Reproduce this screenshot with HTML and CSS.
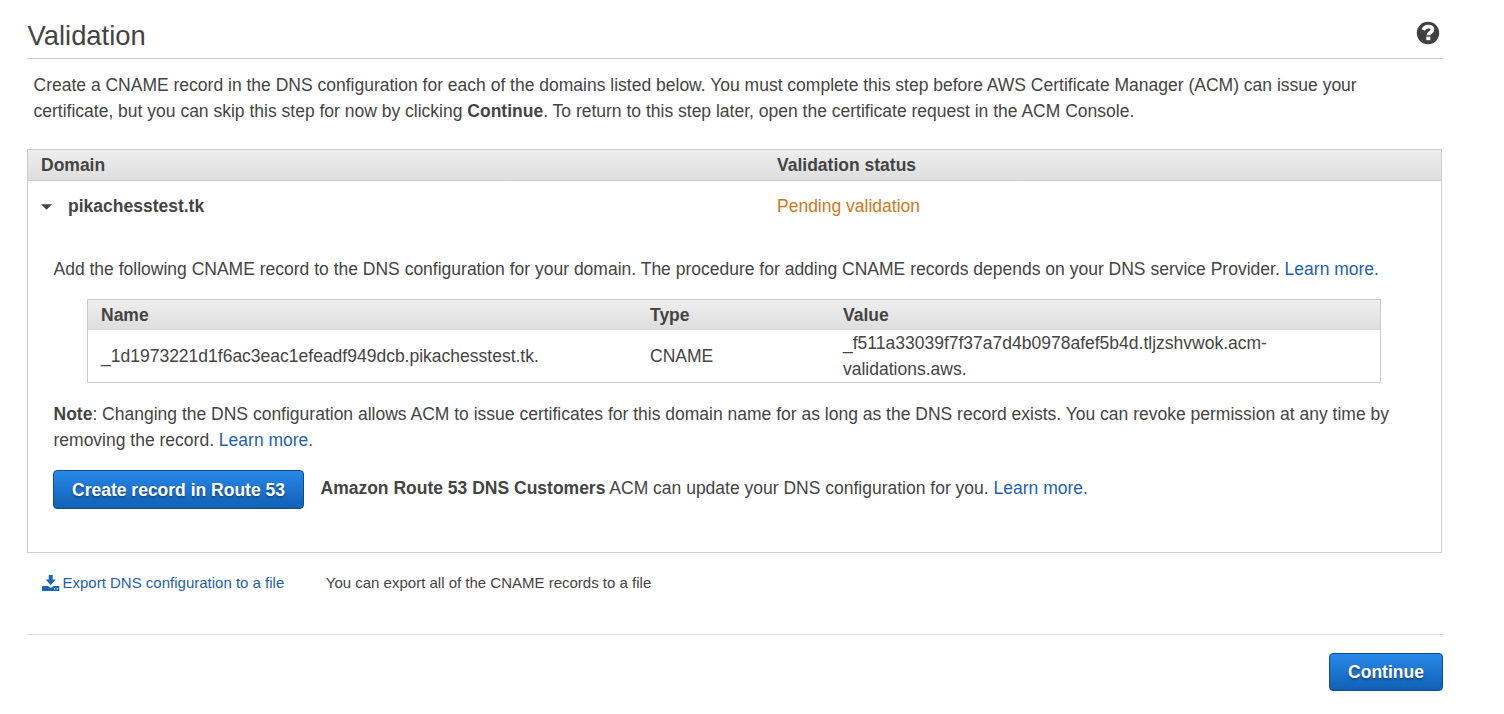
FILE: index.html
```html
<!DOCTYPE html>
<html lang="en">
<head>
<meta charset="utf-8">
<title>Validation</title>
<link rel="stylesheet" href="styles.css">
</head>
<body>
<main class="page">
  <header class="page-header">
    <h1 class="title">Validation</h1>
    <svg class="help" viewBox="0 0 24 24"><circle cx="12" cy="12" r="11.200" fill="#404040"/><path d="M7.300 9C8.200 6.600 9.800 5.700 12.100 5.700c2.600 0 4.300 1.200 4.300 3.100 0 2.700-4 2.600-4 5.400" fill="none" stroke="#fff" stroke-width="3.700"/><rect x="10.300" y="15.700" width="4" height="3.500" fill="#fff"/></svg>
  </header>
  <p class="intro"><span class="line">Create a CNAME record in the DNS configuration for each of the domains listed below. You must complete this step before AWS Certificate Manager (ACM) can issue your</span> <span class="line">certificate, but you can skip this step for now by clicking <b>Continue</b>. To return to this step later, open the certificate request in the ACM Console.</span></p>
  <section class="domains">
    <div class="domains-head"><span>Domain</span><span>Validation status</span></div>
    <div class="domain-row">
      <div class="domain-name"><svg class="caret" viewBox="0 0 12 6"><path d="M0 0h12L6 6z" fill="#444"/></svg><b>pikachesstest.tk</b></div>
      <span class="pending">Pending validation</span>
    </div>
    <div class="details">
      <p class="text">Add the following CNAME record to the DNS configuration for your domain. The procedure for adding CNAME records depends on your DNS service Provider. <a>Learn more.</a></p>
      <div class="record">
        <div class="record-row record-head"><span>Name</span><span>Type</span><span>Value</span></div>
        <div class="record-row record-body"><span>_1d1973221d1f6ac3eac1efeadf949dcb.pikachesstest.tk.</span><span>CNAME</span><span class="value">_f511a33039f7f37a7d4b0978afef5b4d.tljzshvwok.acm-<br>validations.aws.</span></div>
      </div>
      <p class="text note"><span class="line"><b>Note</b>: Changing the DNS configuration allows ACM to issue certificates for this domain name for as long as the DNS record exists. You can revoke permission at any time by</span> <span class="line">removing the record. <a>Learn more.</a></span></p>
      <div class="route"><button class="button create">Create record in Route 53</button><p class="text"><b>Amazon Route 53 DNS Customers</b> ACM can update your DNS configuration for you. <a>Learn more.</a></p></div>
    </div>
  </section>
  <div class="export">
    <a class="export-link"><svg class="download" viewBox="0 0 18 16"><path fill="#1a66b3" d="M6.700 0h4v4.500h3L8.700 10.200 3.700 4.500h3zM0 11h5.800l2.900 2 2.900-2h5.700v5H0z"/><path fill="#fff" d="M12 13.300h1.200v1.200H12zM14.600 13.300h1.200v1.200h-1.200z"/></svg><span>Export DNS configuration to a file</span></a>
    <span>You can export all of the CNAME records to a file</span>
  </div>
  <footer class="footer"><button class="button continue">Continue</button></footer>
</main>
</body>
</html>
```
FILE: styles.css
```css
* { box-sizing: border-box; }
body { margin: 0; background: #fff; color: #444; font: 17.51px/26px "Liberation Sans", Arial, sans-serif; }
p, h1 { margin: 0; }
.page { width: 1416px; margin-left: 27px; padding-top: 12px; }
.page-header { height: 47px; display: flex; justify-content: space-between; border-bottom: 1px solid #ccc; }
.title { font-weight: 400; font-size: 27.4px; line-height: 48px; padding-left: 0.5px; }
.help { width: 24px; height: 24px; margin: 9px 3px 0 0; }
.line { display: block; white-space: nowrap; }
.intro { padding: 13px 0 25px 6.5px; }
.domains { width: 1415px; height: 404px; border: 1px solid #ccc; }
.domains-head, .domain-row { display: grid; grid-template-columns: 736px 1fr; padding-left: 13px; }
.domains-head { height: 31px; line-height: 30px; font-weight: 700; background: linear-gradient(#eee, #dedede); border-bottom: 1px solid #ccc; }
.domain-row { height: 50px; line-height: 50px; }
.domain-name { display: flex; align-items: center; gap: 16.5px; margin-left: -0.5px; }
.caret { width: 11px; height: 6px; margin-top: 2px; }
.pending { color: #cc7a21; }
.details { padding: 25px 0 0 25.5px; }
.text { white-space: nowrap; }
a { color: #1f5fb0; }
.record { width: 1294px; margin: 17px 0 0 33.5px; border: 1px solid #ccc; }
.record-row { display: grid; grid-template-columns: 549px 193px 1fr; align-items: center; padding-left: 13px; }
.record-head { height: 30px; font-weight: 700; background: linear-gradient(#eee, #dedede); }
.record-body { height: 52px; }
.note { margin-top: 18px; }
.route { display: flex; gap: 16.5px; margin: 17px 0 0 -0.5px; }
.route .text { padding-top: 5px; }
.button { border: 1px solid #12498a; border-radius: 4px; background: linear-gradient(#2888e8, #1160b5); color: #fff; font: bold 17.5px/36px "Liberation Sans", Arial, sans-serif; padding: 0; text-shadow: 0 2px 2px #174a82; }
.create { width: 251px; height: 39px; }
.continue { width: 114px; height: 38px; }
.export { display: flex; gap: 41.5px; padding: 17px 0 0 15px; height: 81px; font-size: 15px; }
.export-link { display: flex; align-items: center; gap: 2.5px; height: 26px; }
.download { width: 18px; height: 16px; }
.footer { display: flex; justify-content: flex-end; border-top: 1px solid #ddd; padding-top: 18px; }
```
